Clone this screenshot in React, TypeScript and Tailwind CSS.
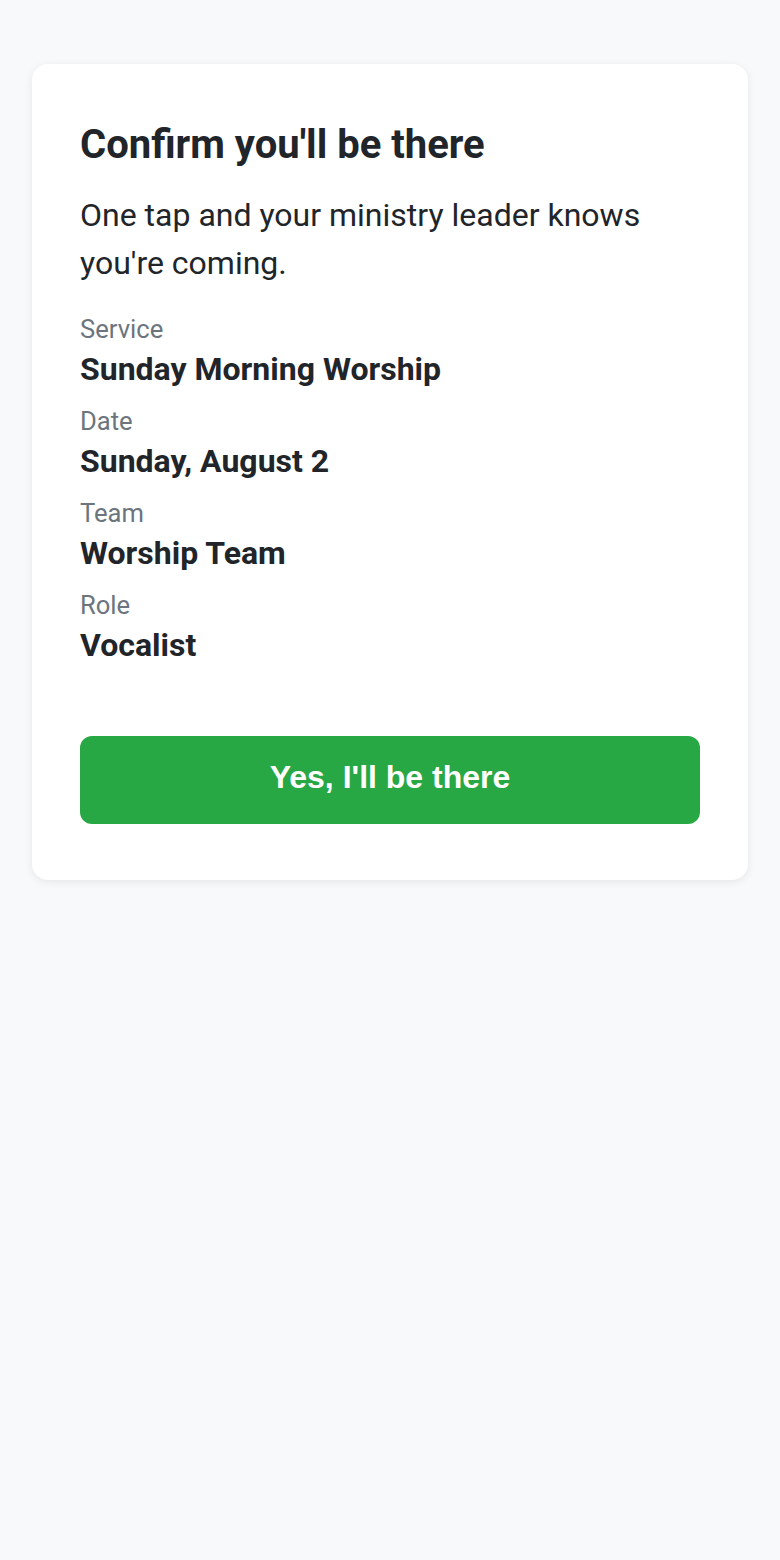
import React from "react";

const details = [
  { label: "Service", value: "Sunday Morning Worship" },
  { label: "Date", value: "Sunday, August 2" },
  { label: "Team", value: "Worship Team" },
  { label: "Role", value: "Vocalist" },
];

export default function App() {
  return (
    <div className="min-h-[1560px] bg-[#f8f9fa] px-8 pt-16 font-['Roboto',sans-serif] text-[#212529]">
      <div className="rounded-2xl bg-white px-12 pt-[57px] pb-[56px] shadow-[0_2px_8px_rgba(0,0,0,0.08)]">
        <h1 className="text-[40px] font-bold leading-[48px]">Confirm you'll be there</h1>
        <p className="mt-[22px] text-[32px] leading-[48px]">
          One tap and your ministry leader knows you're coming.
        </p>
        <div className="mt-[23px]">
          {details.map((d) => (
            <div key={d.label} className="mb-[13px]">
              <div className="text-[25.6px] leading-[39px] text-[#6c757d]">{d.label}</div>
              <div className="text-[32px] font-bold leading-[40px]">{d.value}</div>
            </div>
          ))}
        </div>
        <button
          type="button"
          className="mt-[71px] flex h-[88px] w-full items-center justify-center rounded-xl bg-[#28a745] pb-[6px] font-['Liberation_Sans',Arial,sans-serif] text-[32px] font-bold text-white"
        >
          Yes, I'll be there
        </button>
      </div>
    </div>
  );
}
